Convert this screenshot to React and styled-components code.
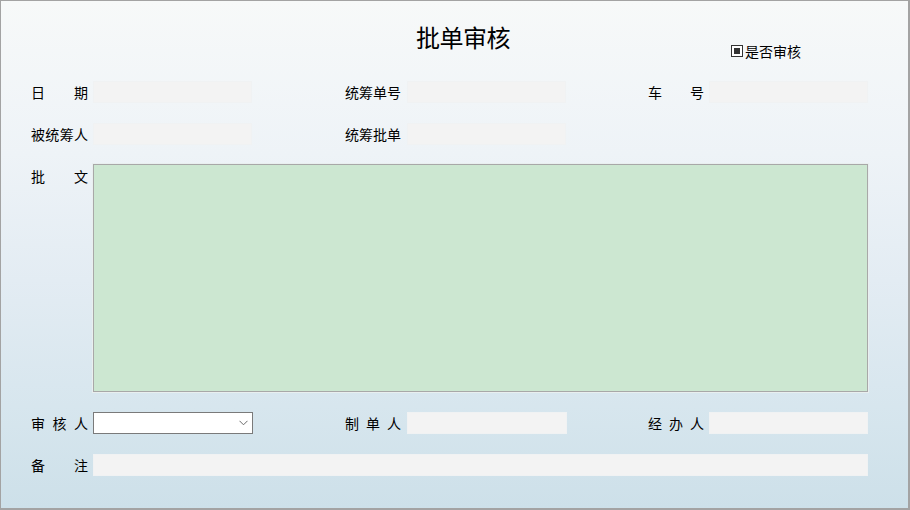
import React from "react";
import styled, { createGlobalStyle } from "styled-components";

const GlobalStyle = createGlobalStyle`
  html, body {
    margin: 0;
    padding: 0;
  }
  body {
    font-family: "Noto Sans CJK SC", "Noto Sans", sans-serif;
    color: #000;
  }
  * {
    box-sizing: border-box;
  }
`;

const Window = styled.div`
  width: 910px;
  height: 510px;
  border: 1px solid #a3a3a3;
  border-right-width: 2px;
  border-bottom-width: 2px;
  background: linear-gradient(
    to bottom,
    #f7f9f9 0%,
    #eef3f7 30%,
    #e3ecf3 55%,
    #d7e6ee 80%,
    #cde0e9 100%
  );
  display: flex;
  flex-direction: column;
  padding: 0 0 0 30px;
`;

const Header = styled.div`
  height: 80px;
  display: flex;
  align-items: flex-start;
  padding-left: 385px;
`;

const Title = styled.h1`
  margin: 21px 0 0;
  font-size: 24px;
  line-height: 30px;
  font-weight: 400;
  letter-spacing: -0.5px;
`;

const Check = styled.label`
  display: flex;
  align-items: center;
  gap: 2px;
  margin: 40px 0 0 221px;
  font-size: 14px;
  line-height: 20px;
`;

const CheckBox = styled.span`
  width: 12px;
  height: 12px;
  border: 1px solid #333;
  background: #fff;
  padding: 2px;
  display: flex;

  &::after {
    content: "";
    flex: 1;
    background: #333;
  }
`;

const Form = styled.div`
  display: flex;
  flex-direction: column;
  gap: 20px;
`;

const Row = styled.div`
  display: grid;
  grid-template-columns: 314px 303px 1fr;
  align-items: start;
  margin-top: ${(p) => p.$shift || 0}px;
`;

const Field = styled.div`
  display: flex;
  align-items: ${(p) => (p.$top ? "flex-start" : "center")};
  gap: ${(p) => p.$gap || 5}px;
  grid-column: ${(p) => (p.$wide ? "1 / -1" : "auto")};
`;

const Label = styled.span`
  width: ${(p) => p.$w || 57}px;
  flex: none;
  font-size: 14px;
  line-height: 22px;
  text-align: justify;
  text-align-last: justify;
  text-justify: inter-character;
  white-space: nowrap;
  margin-top: ${(p) => (p.$top ? 1 : 0)}px;
`;

const Input = styled.div`
  height: 22px;
  width: ${(p) => (p.$w ? `${p.$w}px` : "775px")};
  background: #f3f3f3;
  border: 1px solid #f0f2f3;
`;

const Memo = styled.div`
  width: 775px;
  height: 228px;
  background: #cce7d1;
  border: 1px solid #a8a8a8;
  box-shadow: 0 0 0 1px #e9efef;
`;

const Select = styled.div`
  width: 160px;
  height: 22px;
  background: #fff;
  border: 1px solid #7a7a7a;
  display: flex;
  align-items: center;
  justify-content: flex-end;
  padding-right: 4px;
`;

const Chevron = () => (
  <svg width="9" height="6" viewBox="0 0 9 6">
    <path d="M0.5 0.8 L4.5 4.8 L8.5 0.8" fill="none" stroke="#6a6a6a" strokeWidth="1" />
  </svg>
);

export default function App() {
  return (
    <>
      <GlobalStyle />
      <Window>
        <Header>
          <Title>批单审核</Title>
          <Check>
            <CheckBox />
            是否审核
          </Check>
        </Header>
        <Form>
          <Row>
            <Field>
              <Label>日 期</Label>
              <Input $w={159} />
            </Field>
            <Field $gap={6}>
              <Label $w={56}>统筹单号</Label>
              <Input $w={159} />
            </Field>
            <Field>
              <Label $w={56}>车 号</Label>
              <Input $w={159} />
            </Field>
          </Row>
          <Row>
            <Field>
              <Label>被统筹人</Label>
              <Input $w={159} />
            </Field>
            <Field $gap={6}>
              <Label $w={56}>统筹批单</Label>
              <Input $w={159} />
            </Field>
          </Row>
          <Row $shift={-1}>
            <Field $wide $top>
              <Label $top>批 文</Label>
              <Memo />
            </Field>
          </Row>
          <Row>
            <Field>
              <Label>审 核 人</Label>
              <Select>
                <Chevron />
              </Select>
            </Field>
            <Field $gap={6}>
              <Label $w={56}>制 单 人</Label>
              <Input $w={160} />
            </Field>
            <Field>
              <Label $w={56}>经 办 人</Label>
              <Input $w={159} />
            </Field>
          </Row>
          <Row>
            <Field $wide>
              <Label>备 注</Label>
              <Input />
            </Field>
          </Row>
        </Form>
      </Window>
    </>
  );
}
